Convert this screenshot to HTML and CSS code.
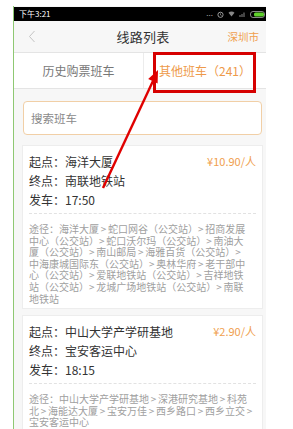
FILE: index.html
```html
<!DOCTYPE html>
<html lang="zh-CN">
<head>
<meta charset="utf-8">
<title>线路列表</title>
<link rel="stylesheet" href="styles.css">
</head>
<body>
<div class="screen">
  <div class="status">
    <span class="time">下午3:21</span>
    <div class="sicons">
      <span class="dots">...</span>
      <svg width="7" height="7" viewBox="0 0 7 7"><circle cx="3.5" cy="3.8" r="2.6" fill="none" stroke="#aaa" stroke-width="0.9"/><path d="M3.5 2.4v1.5l1 .6" fill="none" stroke="#aaa" stroke-width="0.7"/></svg>
      <svg width="7" height="6" viewBox="0 0 7 6"><path d="M0.5 1.8a4.2 4.2 0 0 1 6 0L3.5 5.5z" fill="#888"/></svg>
      <svg width="7" height="6" viewBox="0 0 7 6"><rect x="0.5" y="4" width="1" height="2" fill="#888"/><rect x="2.5" y="3" width="1" height="3" fill="#888"/><rect x="4.5" y="1.5" width="1" height="4.5" fill="#888"/></svg>
      <svg width="16" height="7" viewBox="0 0 16 7"><rect x="0.5" y="0.5" width="14" height="6" rx="2.5" fill="none" stroke="#aaa" stroke-width="0.8"/><rect x="4" y="1.6" width="10" height="3.8" rx="1.5" fill="#5fd12c"/></svg>
    </div>
  </div>
  <div class="nav">
    <svg class="back" width="8" height="13" viewBox="0 0 8 13"><path d="M6.5 1L1.5 6.5l5 5.5" fill="none" stroke="#c4c4c4" stroke-width="1"/></svg>
    <div class="title">线路列表</div>
    <div class="city">深圳市</div>
  </div>
  <div class="tabs">
    <div class="tab">历史购票班车</div>
    <div class="tab active">其他班车（241）</div>
  </div>
  <div class="search-wrap">
    <div class="search">搜索班车</div>
  </div>
  <div class="card">
    <div class="row"><span>起点：海洋大厦</span><span class="price">¥10.90/人</span></div>
    <div class="row">终点：南联地铁站</div>
    <div class="row">发车：17:50</div>
    <div class="route">途径：海洋大厦 &gt; 蛇口网谷（公交站）&gt; 招商发展<br>中心（公交站）&gt; 蛇口沃尔玛（公交站）&gt; 南油大<br>厦（公交站）&gt; 南山邮局 &gt; 海雅百货（公交站）&gt;<br>中海康城国际东（公交站）&gt; 奥林华府 &gt; 老干部中<br>心（公交站）&gt; 爱联地铁站（公交站）&gt; 吉祥地铁<br>站（公交站）&gt; 龙城广场地铁站（公交站）&gt; 南联<br>地铁站</div>
  </div>
  <div class="card">
    <div class="row"><span>起点：中山大学产学研基地</span><span class="price">¥2.90/人</span></div>
    <div class="row">终点：宝安客运中心</div>
    <div class="row">发车：18:15</div>
    <div class="route">途径：中山大学产学研基地 &gt; 深港研究基地 &gt; 科苑<br>北 &gt; 海能达大厦 &gt; 宝安万佳 &gt; 西乡路口 &gt; 西乡立交 &gt;<br>宝安客运中心</div>
  </div>
</div>
<div class="redbox"></div>
<svg class="arrow" width="293" height="429" viewBox="0 0 293 429">
  <line x1="103" y1="188" x2="153" y2="81" stroke="#e00000" stroke-width="2.4"/>
  <polygon points="158,70 157.6,83.5 148.2,79" fill="#e00000"/>
</svg>
</body>
</html>
```

FILE: styles.css
```css
* { box-sizing: border-box; }
body {
  margin: 0;
  background: #fff;
  position: relative;
  font-family: "Noto Sans CJK SC", "Noto Sans", sans-serif;
  color: #333;
}
.screen {
  margin: 6px 0 0 13px;
  width: 253px;
  height: 423px;
  border-left: 1px solid #8fc873;
  background: #f7f7f7;
  overflow: hidden;
}
.status {
  margin-top: 1px;
  height: 14px;
  background: #000;
  color: #fff;
  display: flex;
  align-items: center;
  justify-content: space-between;
  padding: 0 0 0 5px;
}
.time { font-size: 8px; line-height: 14px; }
.sicons { display: flex; align-items: center; gap: 4px; }
.dots { color: #aaa; font-size: 8px; line-height: 8px; margin-top: -3px; }
.nav {
  height: 32px;
  background: #f7f7f7;
  border-bottom: 1px solid #e4e4e4;
  display: grid;
  grid-template-columns: 1fr auto 1fr;
  align-items: center;
  padding: 0 4px 0 10px;
}
.back { margin-left: 4px; }
.title { font-size: 13px; color: #333; letter-spacing: 0.2px; }
.city { justify-self: end; margin-right: 3px; font-size: 10.5px; color: #f0a04e; }
.tabs {
  height: 36px;
  background: #fff;
  border-bottom: 1px solid #e4e4e4;
  display: grid;
  grid-template-columns: 129px 1fr;
}
.tab {
  display: flex;
  align-items: center;
  justify-content: center;
  font-size: 12px;
  color: #777;
}
.tab.active { color: #ee9a4a; border-left: 1px solid #ececec; }
.search-wrap { padding: 12px 4px 10px 9px; }
.search {
  height: 34px;
  background: #fff;
  border: 1px solid #f1cfa6;
  border-radius: 4px;
  padding-left: 7px;
  display: flex;
  align-items: center;
  font-size: 11.5px;
  color: #8a8a8a;
}
.card {
  margin: 0 3px 6px 8px;
  background: #fff;
  border: 1px solid #ededed;
  padding: 6px 6px 4px 6px;
}
.row {
  display: flex;
  justify-content: space-between;
  font-size: 12px;
  line-height: 19px;
  color: #333;
}
.price { font-size: 11px; color: #f0a04e; }
.route {
  margin-top: 4px;
  border-top: 1px dashed #e2e2e2;
  padding-top: 9px;
  font-size: 10px;
  line-height: 11.6px;
  color: #a0a0a0;
  text-spacing-trim: space-all;
  word-spacing: -0.5px;
  white-space: nowrap;
  overflow: hidden;
}
.redbox {
  position: absolute;
  left: 153px;
  top: 52px;
  width: 103px;
  height: 41px;
  border: 3px solid #d60000;
}
.arrow { position: absolute; left: 0; top: 0; pointer-events: none; }
```
